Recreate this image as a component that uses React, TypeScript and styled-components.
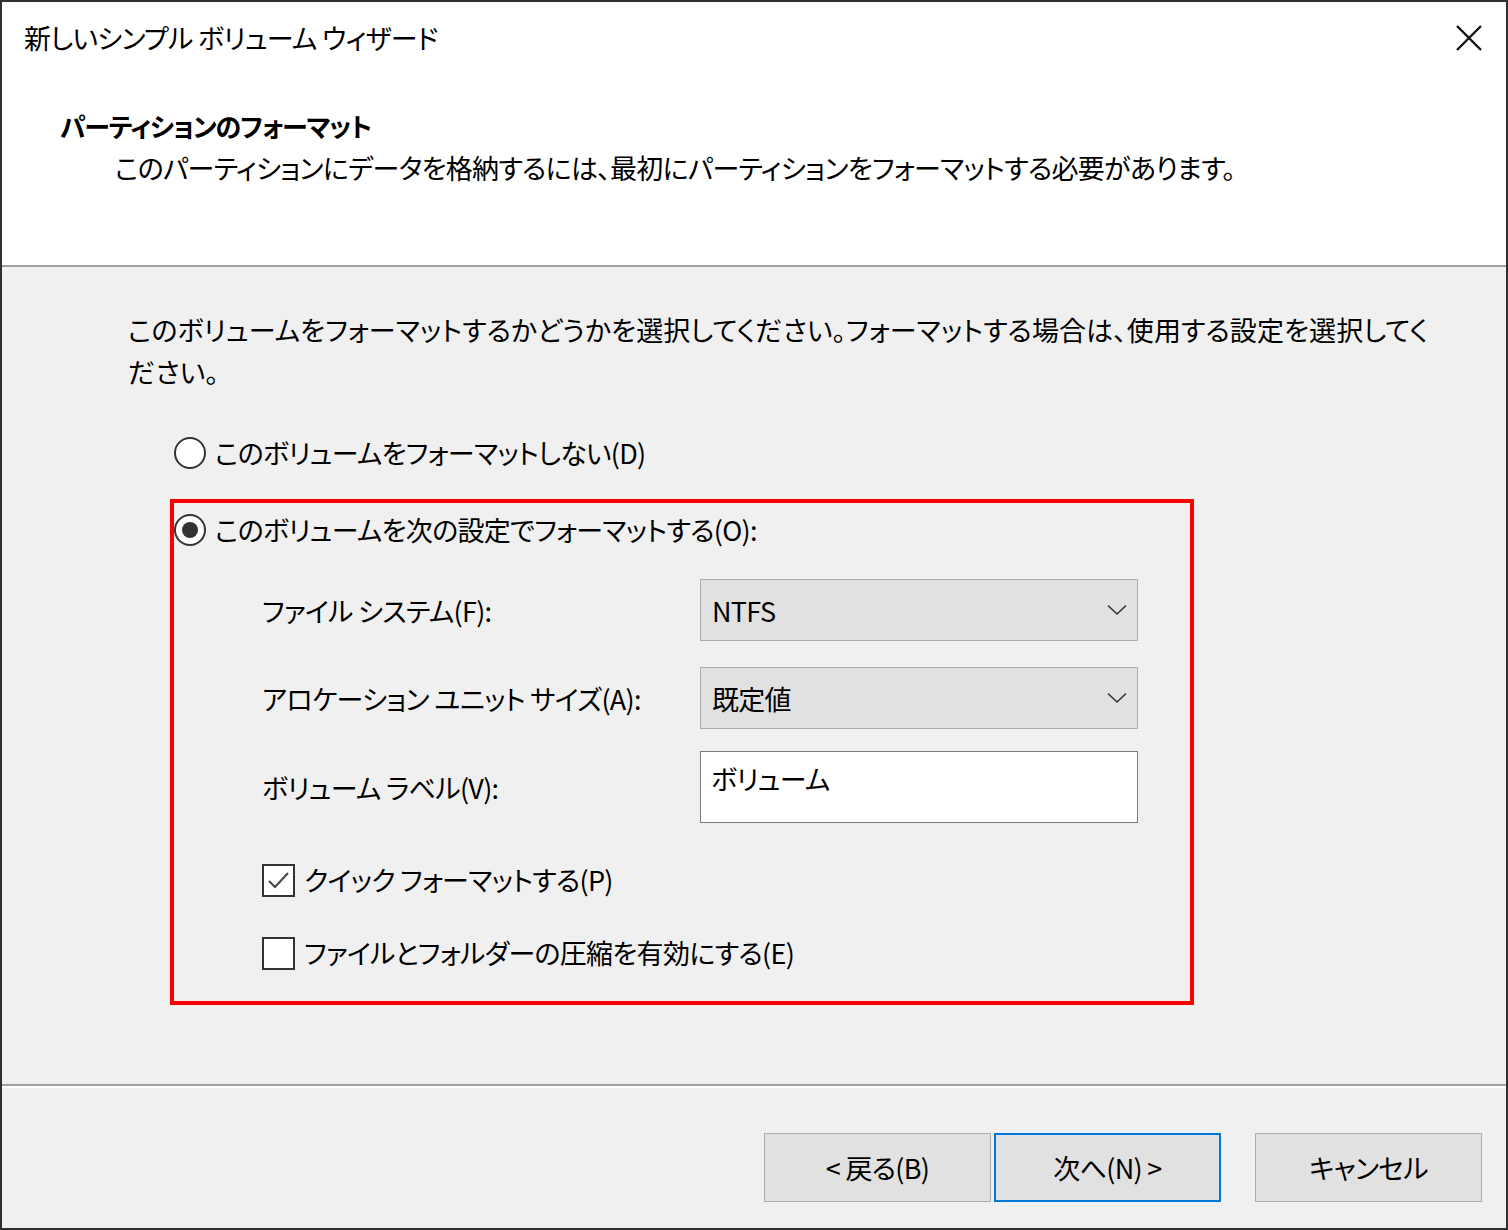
import styled, { createGlobalStyle } from "styled-components";

const GlobalStyle = createGlobalStyle`
  html, body {
    margin: 0;
    padding: 0;
    background: #ffffff;
  }
  body {
    font-family: "Noto Sans CJK JP", "Noto Sans", sans-serif;
    font-feature-settings: "palt";
    color: #000000;
  }
  * {
    box-sizing: border-box;
  }
`;

const FONT = 27;

export default function App() {
  return (
    <>
      <GlobalStyle />
      <Window>
        <Header>
          <TitleBar>
            <Title>新しいシンプル ボリューム ウィザード</Title>
            <CloseButton aria-label="閉じる">
              <svg width="28" height="28" viewBox="0 0 28 28">
                <path d="M2 2 L26 26 M26 2 L2 26" stroke="#111" strokeWidth="2.4" fill="none" />
              </svg>
            </CloseButton>
          </TitleBar>
          <Heading>パーティションのフォーマット</Heading>
          <Subtitle>
            このパーティションにデータを格納するには、最初にパーティションをフォーマットする必要があります。
          </Subtitle>
        </Header>

        <Body>
          <Paragraph>
            このボリュームをフォーマットするかどうかを選択してください。フォーマットする場合は、使用する設定を選択してく
            <br />
            ださい。
          </Paragraph>

          <Options>
            <OptionRow $inset={4}>
              <Radio />
              <OptionText>このボリュームをフォーマットしない(D)</OptionText>
            </OptionRow>

            <Highlight>
              <OptionRow $inset={0}>
                <Radio checked />
                <OptionText>このボリュームを次の設定でフォーマットする(O):</OptionText>
              </OptionRow>

              <Settings>
                <FieldRow $top={29}>
                  <FieldLabel>ファイル システム(F):</FieldLabel>
                  <Select>
                    <span>NTFS</span>
                    <Chevron />
                  </Select>
                </FieldRow>
                <FieldRow $top={26}>
                  <FieldLabel>アロケーション ユニット サイズ(A):</FieldLabel>
                  <Select>
                    <span>既定値</span>
                    <Chevron />
                  </Select>
                </FieldRow>
                <FieldRow $top={22}>
                  <FieldLabel>ボリューム ラベル(V):</FieldLabel>
                  <TextBox>ボリューム</TextBox>
                </FieldRow>

                <CheckRow $top={37}>
                  <Checkbox checked />
                  <OptionText>クイック フォーマットする(P)</OptionText>
                </CheckRow>
                <CheckRow $top={33}>
                  <Checkbox />
                  <OptionText>ファイルとフォルダーの圧縮を有効にする(E)</OptionText>
                </CheckRow>
              </Settings>
            </Highlight>
          </Options>
        </Body>

        <Footer>
          <ButtonGroup>
            <Button>&lt; 戻る(B)</Button>
            <Button $primary>次へ(N) &gt;</Button>
          </ButtonGroup>
          <Button>キャンセル</Button>
        </Footer>
      </Window>
    </>
  );
}

function Radio({ checked = false }: { checked?: boolean }) {
  return <RadioCircle>{checked && <RadioDot />}</RadioCircle>;
}

function Checkbox({ checked = false }: { checked?: boolean }) {
  return (
    <CheckSquare>
      {checked && (
        <svg width="29" height="29" viewBox="0 0 29 29">
          <polyline points="5,15 11,21 24,7" stroke="#444" strokeWidth="2" fill="none" />
        </svg>
      )}
    </CheckSquare>
  );
}

function Chevron() {
  return (
    <svg width="20" height="12" viewBox="0 0 20 12">
      <polyline points="1,1.5 10,10 19,1.5" stroke="#333" strokeWidth="1.6" fill="none" />
    </svg>
  );
}

const Window = styled.div`
  width: 1508px;
  height: 1230px;
  border: 2px solid #2f2f2f;
  display: flex;
  flex-direction: column;
  overflow: hidden;
  font-size: ${FONT}px;
  letter-spacing: -0.7px;
`;

const Header = styled.div`
  height: 265px;
  background: #ffffff;
  border-bottom: 2px solid #a0a0a0;
  padding: 16px 23px 0 22px;
`;

const TitleBar = styled.div`
  display: flex;
  align-items: center;
  justify-content: space-between;
  height: 40px;
`;

const Title = styled.div`
  line-height: 40px;
  white-space: nowrap;
`;

const CloseButton = styled.div`
  width: 28px;
  height: 28px;
  display: flex;
`;

const Heading = styled.div`
  margin: 47px 0 0 36px;
  font-size: 26px;
  font-weight: 700;
  letter-spacing: -1.1px;
  line-height: 42px;
  white-space: nowrap;
`;

const Subtitle = styled.div`
  margin-left: 91px;
  line-height: 42px;
  white-space: nowrap;
`;

const Body = styled.div`
  flex: 1;
  background: #f0f0f0;
  padding: 42px 0 0 126px;
`;

const Paragraph = styled.p`
  margin: 0;
  line-height: 42px;
  letter-spacing: 0.1px;
  white-space: nowrap;
`;

const Options = styled.div`
  margin: 40px 0 0 42px;
`;

const OptionRow = styled.div<{ $inset: number }>`
  display: flex;
  align-items: center;
  gap: 9px;
  height: 40px;
  padding-left: ${(p) => p.$inset}px;
`;

const OptionText = styled.span`
  white-space: nowrap;
  line-height: 40px;
`;

const RadioCircle = styled.span`
  width: 32px;
  height: 32px;
  border-radius: 50%;
  border: 2px solid #333333;
  background: #ffffff;
  display: flex;
  align-items: center;
  justify-content: center;
  flex-shrink: 0;
`;

const RadioDot = styled.span`
  width: 16px;
  height: 16px;
  border-radius: 50%;
  background: #333333;
`;

const Highlight = styled.div`
  margin-top: 26px;
  width: 1024px;
  border: 4px solid #ff0000;
  padding: 7px 0 28px 0;
`;

const Settings = styled.div`
  padding-left: 88px;
`;

const FieldRow = styled.div<{ $top: number }>`
  display: grid;
  grid-template-columns: 438px 438px;
  align-items: center;
  margin-top: ${(p) => p.$top}px;
`;

const FieldLabel = styled.span`
  white-space: nowrap;
`;

const Select = styled.div`
  height: 62px;
  background: #e1e1e1;
  border: 1px solid #adadad;
  display: flex;
  align-items: center;
  justify-content: space-between;
  padding: 0 10px 0 11px;
`;

const TextBox = styled.div`
  height: 72px;
  background: #ffffff;
  border: 1px solid #7a7a7a;
  padding: 6px 10px;
  line-height: 42px;
`;

const CheckRow = styled.div<{ $top: number }>`
  display: flex;
  align-items: center;
  gap: 9px;
  height: 40px;
  margin-top: ${(p) => p.$top}px;
`;

const CheckSquare = styled.span`
  width: 33px;
  height: 33px;
  border: 2px solid #333333;
  background: #ffffff;
  display: flex;
  align-items: center;
  justify-content: center;
  flex-shrink: 0;
`;

const Footer = styled.div`
  height: 144px;
  border-top: 2px solid #a0a0a0;
  box-shadow: inset 0 2px 0 #ffffff;
  background: #f0f0f0;
  display: flex;
  justify-content: flex-end;
  align-items: flex-start;
  gap: 34px;
  padding: 47px 24px 0 0;
`;

const ButtonGroup = styled.div`
  display: flex;
  gap: 3px;
`;

const Button = styled.div<{ $primary?: boolean }>`
  width: 227px;
  height: 69px;
  background: #e1e1e1;
  border: ${(p) => (p.$primary ? "2px solid #0078d7" : "1px solid #adadad")};
  display: flex;
  align-items: center;
  justify-content: center;
  white-space: nowrap;
`;
